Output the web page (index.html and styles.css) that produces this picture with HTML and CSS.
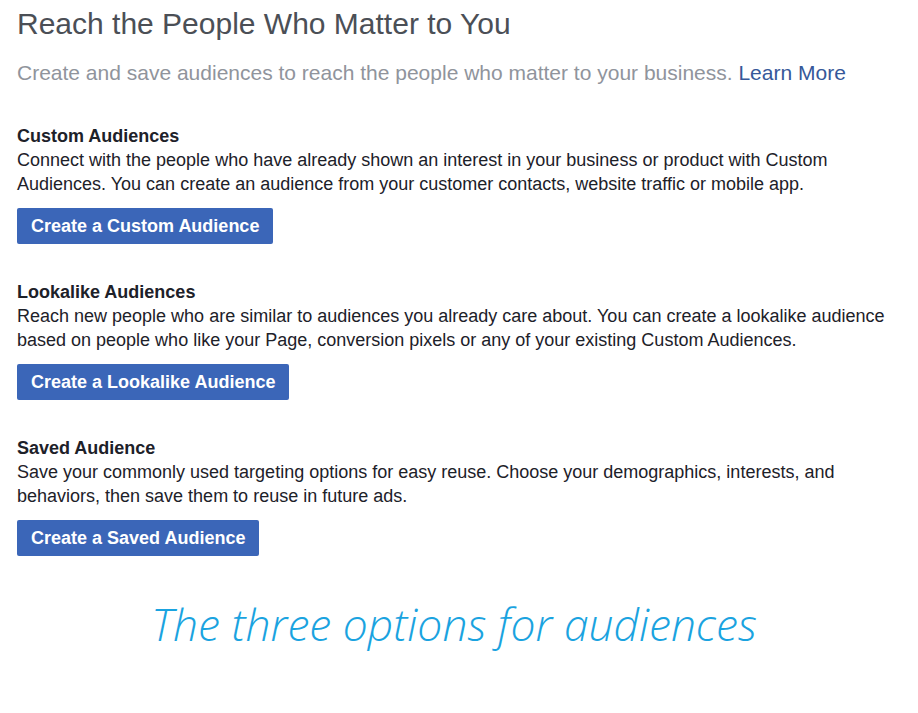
FILE: index.html
```html
<!DOCTYPE html>
<html>
<head>
<meta charset="utf-8">
<link rel="stylesheet" href="styles.css">
</head>
<body>
<div class="page">
  <h1 class="title">Reach the People Who Matter to You</h1>
  <p class="intro">Create and save audiences to reach the people who matter to your business. <a class="link" href="#">Learn More</a></p>

  <section class="option">
    <h2 class="option-title">Custom Audiences</h2>
    <p class="option-desc">Connect with the people who have already shown an interest in your business or product with Custom Audiences. You can create an audience from your customer contacts, website traffic or mobile app.</p>
    <button class="btn">Create a Custom Audience</button>
  </section>

  <section class="option">
    <h2 class="option-title">Lookalike Audiences</h2>
    <p class="option-desc">Reach new people who are similar to audiences you already care about. You can create a lookalike audience based on people who like your Page, conversion pixels or any of your existing Custom Audiences.</p>
    <button class="btn">Create a Lookalike Audience</button>
  </section>

  <section class="option">
    <h2 class="option-title">Saved Audience</h2>
    <p class="option-desc">Save your commonly used targeting options for easy reuse. Choose your demographics, interests, and behaviors, then save them to reuse in future ads.</p>
    <button class="btn">Create a Saved Audience</button>
  </section>

  <p class="caption">The three options for audiences</p>
</div>
</body>
</html>
```
FILE: styles.css
```css
html, body {
  margin: 0;
  padding: 0;
  background: #ffffff;
}
body {
  font-family: "Liberation Sans", Arial, sans-serif;
  color: #1d2129;
}
.page {
  padding: 6px 17px 0 17px;
}
.title {
  margin: 0;
  font-size: 30px;
  font-weight: normal;
  line-height: 36px;
  color: #4b4f56;
}
.intro {
  margin: 17px 0 0 0;
  font-size: 21px;
  line-height: 28px;
  color: #90949c;
}
.link {
  color: #365899;
  text-decoration: none;
}
.option {
  margin-top: 37px;
}
.option + .option {
  margin-top: 36px;
}
.option-title {
  margin: 0;
  font-size: 18px;
  font-weight: bold;
  line-height: 24px;
  color: #1d2129;
}
.option-desc {
  margin: 0;
  font-size: 18px;
  line-height: 24px;
  color: #1d2129;
}
.btn {
  display: block;
  margin-top: 12px;
  height: 36px;
  padding: 0 14px;
  border: 0;
  border-radius: 2px;
  background: #3b66b8;
  color: #ffffff;
  font-family: "Liberation Sans", Arial, sans-serif;
  font-size: 18px;
  font-weight: bold;
  cursor: pointer;
}
.caption {
  margin: 40px 0 0 0;
  padding-right: 10px;
  text-align: center;
  font-family: "Open Sans", sans-serif;
  font-style: italic;
  font-weight: 300;
  font-size: 44.4px;
  line-height: 56px;
  color: #1aa3e0;
}
```
